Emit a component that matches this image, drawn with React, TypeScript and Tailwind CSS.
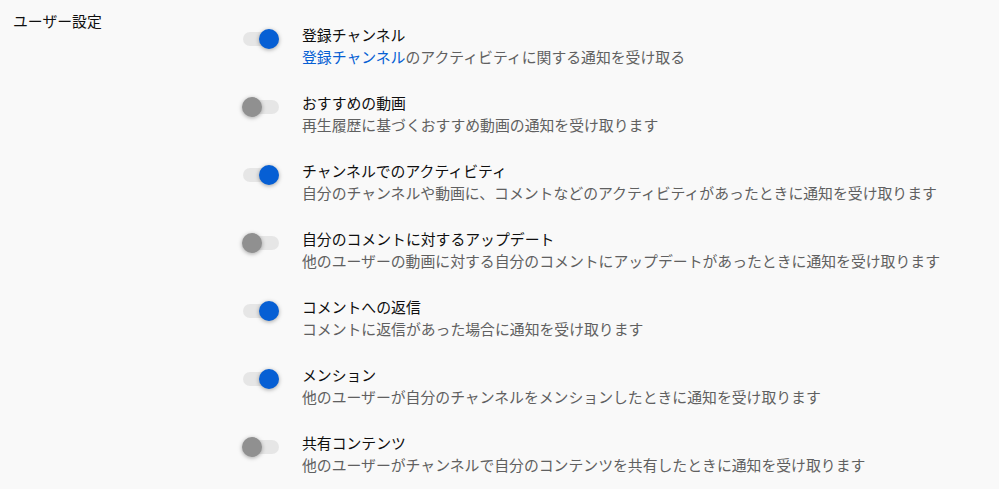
import { useState } from 'react';

type Setting = {
  title: string;
  desc: React.ReactNode;
  on: boolean;
};

const initial: Setting[] = [
  {
    title: '登録チャンネル',
    desc: (
      <>
        <span className="text-[#065fd4]">登録チャンネル</span>のアクティビティに関する通知を受け取る
      </>
    ),
    on: true,
  },
  { title: 'おすすめの動画', desc: '再生履歴に基づくおすすめ動画の通知を受け取ります', on: false },
  {
    title: 'チャンネルでのアクティビティ',
    desc: '自分のチャンネルや動画に、コメントなどのアクティビティがあったときに通知を受け取ります',
    on: true,
  },
  {
    title: '自分のコメントに対するアップデート',
    desc: '他のユーザーの動画に対する自分のコメントにアップデートがあったときに通知を受け取ります',
    on: false,
  },
  { title: 'コメントへの返信', desc: 'コメントに返信があった場合に通知を受け取ります', on: true },
  {
    title: 'メンション',
    desc: '他のユーザーが自分のチャンネルをメンションしたときに通知を受け取ります',
    on: true,
  },
  {
    title: '共有コンテンツ',
    desc: '他のユーザーがチャンネルで自分のコンテンツを共有したときに通知を受け取ります',
    on: false,
  },
];

function Toggle({ on, onClick }: { on: boolean; onClick: () => void }) {
  return (
    <button
      onClick={onClick}
      className="relative mt-[5px] h-5 w-[38px] shrink-0"
      aria-pressed={on}
    >
      <span className="absolute left-[1px] top-[3px] h-[14px] w-[36px] rounded-full bg-[#e6e6e6]" />
      <span
        className={`absolute top-0 h-5 w-5 rounded-full shadow-[0_1px_4px_rgba(0,0,0,0.35)] ${
          on ? 'left-[17px] bg-[#065fd4]' : 'left-0 bg-[#909090]'
        }`}
      />
    </button>
  );
}

export default function App() {
  const [items, setItems] = useState(initial);

  const flip = (i: number) =>
    setItems((xs) => xs.map((x, j) => (j === i ? { ...x, on: !x.on } : x)));

  return (
    <div
      className="min-h-[489px] w-full bg-[#f9f9f9] pl-[13px] pt-[10px] text-[14.85px] leading-[22px] text-[#0f0f0f]"
      style={{ fontFamily: '"Noto Sans CJK JP", "Noto Sans", sans-serif' }}
    >
      <div className="flex">
        <div className="w-[229px] shrink-0">ユーザー設定</div>
        <div className="mt-[14px] flex flex-col gap-6">
          {items.map((s, i) => (
            <div key={i} className="flex gap-[22px]">
              <Toggle on={s.on} onClick={() => flip(i)} />
              <div>
                <div>{s.title}</div>
                <div className="text-[#606060]">{s.desc}</div>
              </div>
            </div>
          ))}
        </div>
      </div>
    </div>
  );
}
